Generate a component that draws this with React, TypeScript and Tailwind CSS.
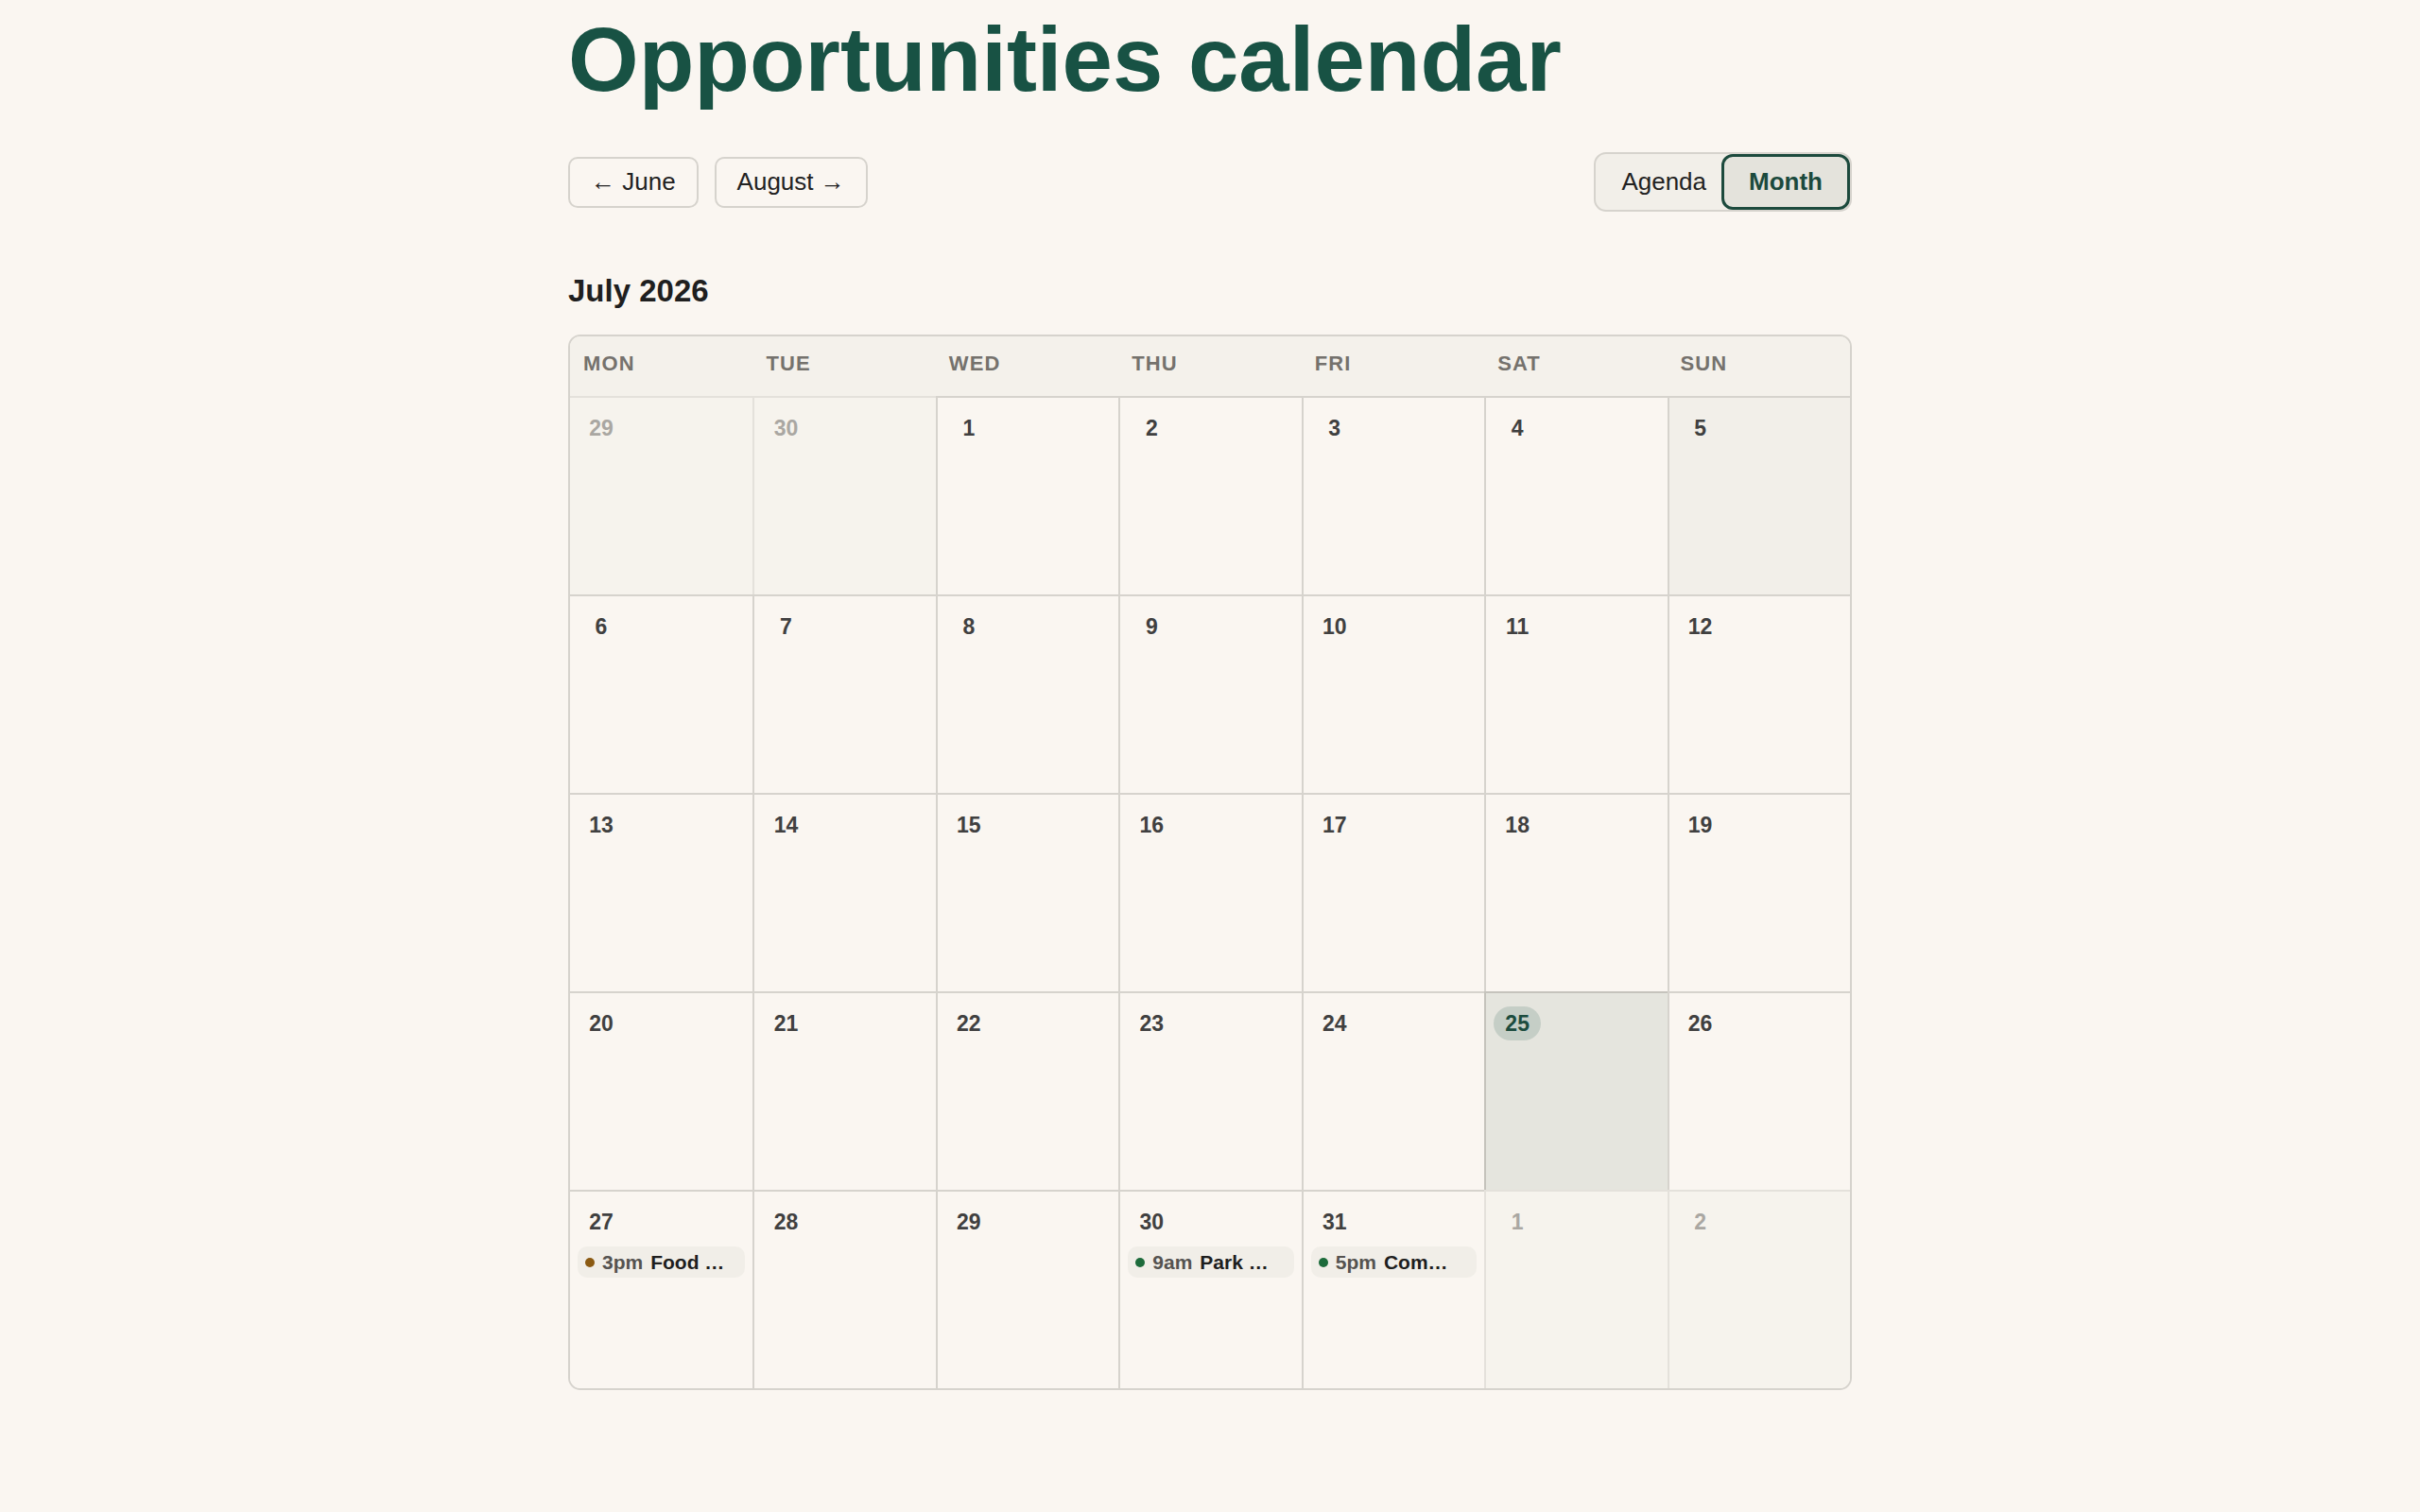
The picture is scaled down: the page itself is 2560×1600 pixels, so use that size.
import React from "react";

type Cell = { day: number; inMonth: boolean };

type Opportunity = { day: number; time: string; title: string; dot: string };

const WEEKDAYS = ["Mon", "Tue", "Wed", "Thu", "Fri", "Sat", "Sun"];

const OPPORTUNITIES: Opportunity[] = [
  { day: 27, time: "3pm", title: "Food bank sorting", dot: "bg-[#8b5a12]" },
  { day: 30, time: "9am", title: "Park cleanup", dot: "bg-[#1d6b3b]" },
  { day: 31, time: "5pm", title: "Community dinner", dot: "bg-[#1d6b3b]" },
];

const SELECTED = 25;
const HOVERED = 5;

function buildWeeks(): Cell[][] {
  const cells: Cell[] = [
    { day: 29, inMonth: false },
    { day: 30, inMonth: false },
  ];
  for (let d = 1; d <= 31; d++) cells.push({ day: d, inMonth: true });
  cells.push({ day: 1, inMonth: false }, { day: 2, inMonth: false });
  const weeks: Cell[][] = [];
  for (let i = 0; i < cells.length; i += 7) weeks.push(cells.slice(i, i + 7));
  return weeks;
}

export default function App() {
  const weeks = buildWeeks();

  return (
    <div className="min-h-screen bg-[#faf6f1] font-['Liberation_Sans',Arial,sans-serif] text-[#222]">
      <div className="mx-auto w-[1358px] pt-[15px] pb-20">
        <h1 className="text-[96px] font-bold leading-none text-[#185244]">Opportunities calendar</h1>

        {/* toolbar */}
        <div className="mt-[50px] flex h-[63px] items-center justify-between">
          <div className="flex gap-[17px]">
            <button className="h-[54px] rounded-[10px] border-2 border-[#d6d3cd] px-[22px] text-[26px] text-[#222]">
              ← June
            </button>
            <button className="h-[54px] rounded-[10px] border-2 border-[#d6d3cd] px-[22px] text-[26px] text-[#222]">
              August →
            </button>
          </div>
          <div className="flex rounded-[13px] border-2 border-[#d6d3cd] bg-[#f2efe9]">
            <button className="h-[59px] pl-[27px] pr-[16px] text-[26px] text-[#222]">Agenda</button>
            <button className="h-[59px] rounded-[12px] border-[3px] border-[#1c4a3d] bg-[#e4e3dc] px-[26px] text-[26px] font-bold text-[#1b4a3d]">
              Month
            </button>
          </div>
        </div>

        <h2 className="mt-[67px] text-[33px] font-bold leading-none text-[#1f1f1f]">July 2026</h2>

        {/* month grid */}
        <div className="mt-[30px] overflow-hidden rounded-[13px] border-2 border-[#d6d3cd]">
          <div className="grid h-[63px] grid-cols-7 bg-[#f4f1eb]">
            {WEEKDAYS.map((w) => (
              <div
                key={w}
                className="pl-[14px] pt-[18px] text-[22px] font-bold uppercase leading-none tracking-[0.05em] text-[#75726d]"
              >
                {w}
              </div>
            ))}
          </div>
          <div className="grid grid-cols-7">
            {weeks.map((week, wi) =>
              week.map((c, ci) => {
                const selected = c.inMonth && c.day === SELECTED;
                const hovered = c.inMonth && c.day === HOVERED;
                const events = c.inMonth ? OPPORTUNITIES.filter((o) => o.day === c.day) : [];
                let tone = "bg-[#faf6f1] border-[#d6d3cd]";
                if (!c.inMonth) tone = "bg-[#f6f3ed] border-[#e4e1db]";
                if (hovered) tone = "bg-[#f2efe9] border-[#d6d3cd]";
                if (selected) tone = "bg-[#e5e5de] border-[#c5c3bc]";
                return (
                  <div
                    key={`${wi}-${ci}`}
                    className={`h-[210px] min-w-0 border-t-2 px-2 pt-[14px] ${ci > 0 ? "border-l-2" : ""} ${tone}`}
                  >
                    <div
                      className={`inline-flex h-[36px] min-w-[50px] items-center justify-center rounded-full px-3 text-[23px] font-bold ${
                        selected
                          ? "bg-[#c5cec6] text-[#1c4c3e]"
                          : c.inMonth
                            ? "text-[#404040]"
                            : "text-[#aaa7a2]"
                      }`}
                    >
                      {c.day}
                    </div>
                    {events.map((e) => (
                      <div
                        key={e.title}
                        className="mt-2 flex h-[33px] items-center rounded-[10px] bg-[#f1eee8] pl-2 pr-[16px] text-[21px] font-bold"
                      >
                        <span className={`h-[10px] w-[10px] shrink-0 rounded-full ${e.dot}`} />
                        <span className="ml-2 shrink-0 text-[#555350]">{e.time}</span>
                        <span className="ml-[8px] min-w-0 flex-1 truncate text-[#1e1e1e]">{e.title}</span>
                      </div>
                    ))}
                  </div>
                );
              })
            )}
          </div>
        </div>
      </div>
    </div>
  );
}
